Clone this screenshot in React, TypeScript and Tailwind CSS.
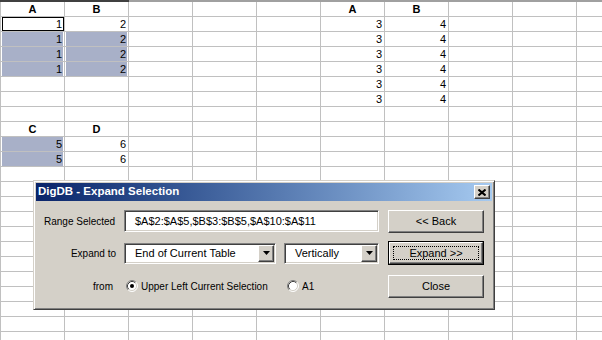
import React from "react";

type Cell = { t?: string; h?: boolean; s?: boolean; a?: boolean };

const COLS = 10;
const ROWS = 23;

// sheet contents keyed by "row-col"
const sheet: Record<string, Cell> = {
  "0-0": { t: "A", h: true },
  "0-1": { t: "B", h: true },
  "0-5": { t: "A", h: true },
  "0-6": { t: "B", h: true },
  "1-0": { t: "1", a: true },
  "1-1": { t: "2" },
  "8-0": { t: "C", h: true },
  "8-1": { t: "D", h: true },
  "9-0": { t: "5", s: true },
  "9-1": { t: "6" },
  "10-0": { t: "5", s: true },
  "10-1": { t: "6" },
};
for (let r = 2; r <= 4; r++) {
  sheet[`${r}-0`] = { t: "1", s: true };
  sheet[`${r}-1`] = { t: "2", s: true };
}
for (let r = 1; r <= 6; r++) {
  sheet[`${r}-5`] = { t: "3" };
  sheet[`${r}-6`] = { t: "4" };
}

const raised =
  "border border-t-white border-l-white border-r-[#404040] border-b-[#404040] shadow-[inset_-1px_-1px_0_#808080] bg-[#d4d0c8]";
const sunken =
  "border border-t-[#808080] border-l-[#808080] border-r-white border-b-white shadow-[inset_1px_1px_0_#404040,inset_-1px_-1px_0_#d4d0c8] bg-white";

const Radio = ({ checked }: { checked?: boolean }) => (
  <svg width="12" height="12" viewBox="0 0 12 12" className="shrink-0">
    <circle cx="6" cy="6" r="5" fill="#fff" />
    <path d="M9.89 2.11 A5.5 5.5 0 0 0 2.11 9.89" stroke="#808080" fill="none" />
    <path d="M2.11 9.89 A5.5 5.5 0 0 0 9.89 2.11" stroke="#fff" fill="none" />
    <path d="M9.18 2.82 A4.5 4.5 0 0 0 2.82 9.18" stroke="#404040" fill="none" />
    <path d="M2.82 9.18 A4.5 4.5 0 0 0 9.18 2.82" stroke="#d4d0c8" fill="none" />
    {checked && <circle cx="6" cy="6" r="2" fill="#000" />}
  </svg>
);

const Arrow = () => (
  <div className={`${raised} flex w-[16px] h-full items-center justify-center`}>
    <svg width="7" height="4" viewBox="0 0 7 4">
      <path d="M0 0 H7 L3.5 4 Z" fill="#000" />
    </svg>
  </div>
);

const Select = ({ value, w }: { value: string; w: string }) => (
  <div className={`${sunken} ${w} flex h-[21px] items-stretch p-px`}>
    <div className="flex flex-1 items-center pl-[9px] text-[11px]">{value}</div>
    <Arrow />
  </div>
);

const Button = ({ label }: { label: string }) => (
  <div className={`${raised} flex w-[96px] h-[23px] items-center justify-center text-[11px]`}>
    {label}
  </div>
);

const Dialog = () => (
  <div className="absolute left-[33px] top-[180px] w-[462px] h-[130px] border border-t-[#d4d0c8] border-l-[#d4d0c8] border-r-[#404040] border-b-[#404040] shadow-[inset_1px_1px_0_#ffffff,inset_-1px_-1px_0_#808080] bg-[#d4d0c8] p-[2px]">
    {/* title bar */}
    <div className="flex h-[18px] items-center justify-between bg-linear-to-r from-[#0a246a] to-[#a6caf0] pl-[2px] pr-[2px]">
      <span className="text-[11.5px] font-bold text-white">DigDB - Expand Selection</span>
      <div className={`${raised} flex w-[16px] h-[14px] items-center justify-center`}>
        <svg width="8" height="7" viewBox="0 0 8 7">
          <path d="M0.5 0.5 L7.5 6.5 M7.5 0.5 L0.5 6.5" stroke="#000" strokeWidth="2" />
        </svg>
      </div>
    </div>

    <div className="flex flex-col pt-[8px] pl-[8px]">
      <div className="flex h-[24px] items-center">
        <div className="w-[80px] text-[10px]">Range Selected</div>
        <div className={`${sunken} flex w-[255px] h-[22px] items-center pl-[10px] text-[11px]`}>
          $A$2:$A$5,$B$3:$B$5,$A$10:$A$11
        </div>
        <div className="ml-[9px]">
          <Button label="<< Back" />
        </div>
      </div>

      <div className="mt-[8px] flex h-[24px] items-center">
        <div className="w-[80px] pr-[8px] text-right text-[10px]">Expand to</div>
        <Select value="End of Current Table" w="w-[152px]" />
        <div className="ml-[8px]">
          <Select value="Vertically" w="w-[95px]" />
        </div>
        <div className="ml-[9px] border border-black">
          <div className={`${raised} relative flex w-[94px] h-[22px] items-center justify-center text-[11px]`}>
            <span className="absolute inset-[3px] border border-dotted border-black" />
            Expand &gt;&gt;
          </div>
        </div>
      </div>

      <div className="mt-[9px] flex h-[24px] items-center">
        <div className="w-[80px] pr-[11px] text-right text-[10px]">from</div>
        <div className="flex w-[264px] items-center text-[10px]">
          <div className="flex w-[163px] items-center pl-[2px]">
            <Radio checked />
            <span className="ml-[3px]">Upper Left Current Selection</span>
          </div>
          <Radio />
          <span className="ml-[3px]">A1</span>
        </div>
        <Button label="Close" />
      </div>
    </div>
  </div>
);

export default function App() {
  const cells = [];
  for (let r = 0; r < ROWS; r++) {
    for (let c = 0; c < COLS; c++) {
      const cell = sheet[`${r}-${c}`] || {};
      cells.push(
        <div key={`${r}-${c}`} className="relative border-r border-b border-[#c0c0c0]">
          {cell.s && <div className="absolute inset-y-0 left-px right-px bg-[#a8b0c8]" />}
          {cell.a && <div className="absolute inset-y-0 left-px right-0 border-[1.5px] border-black" />}
          <div
            className={`relative flex h-full items-center text-[11px] leading-none ${
              cell.h ? "justify-center font-bold" : "justify-end pr-[2px]"
            }`}
          >
            {cell.t}
          </div>
        </div>
      );
    }
  }

  return (
    <div className="relative w-[602px] h-[340px] overflow-hidden bg-white font-['Liberation_Sans',Arial,sans-serif] text-black">
      <div className="flex h-[2px]">
        <div className="w-[129px] bg-[#404040]" />
        <div className="flex-1 bg-[#a0a0a0]" />
      </div>
      <div className="grid w-[641px] grid-cols-[repeat(10,64px)] auto-rows-[15px] border-l border-[#c0c0c0]">
        {cells}
      </div>
      <Dialog />
    </div>
  );
}
